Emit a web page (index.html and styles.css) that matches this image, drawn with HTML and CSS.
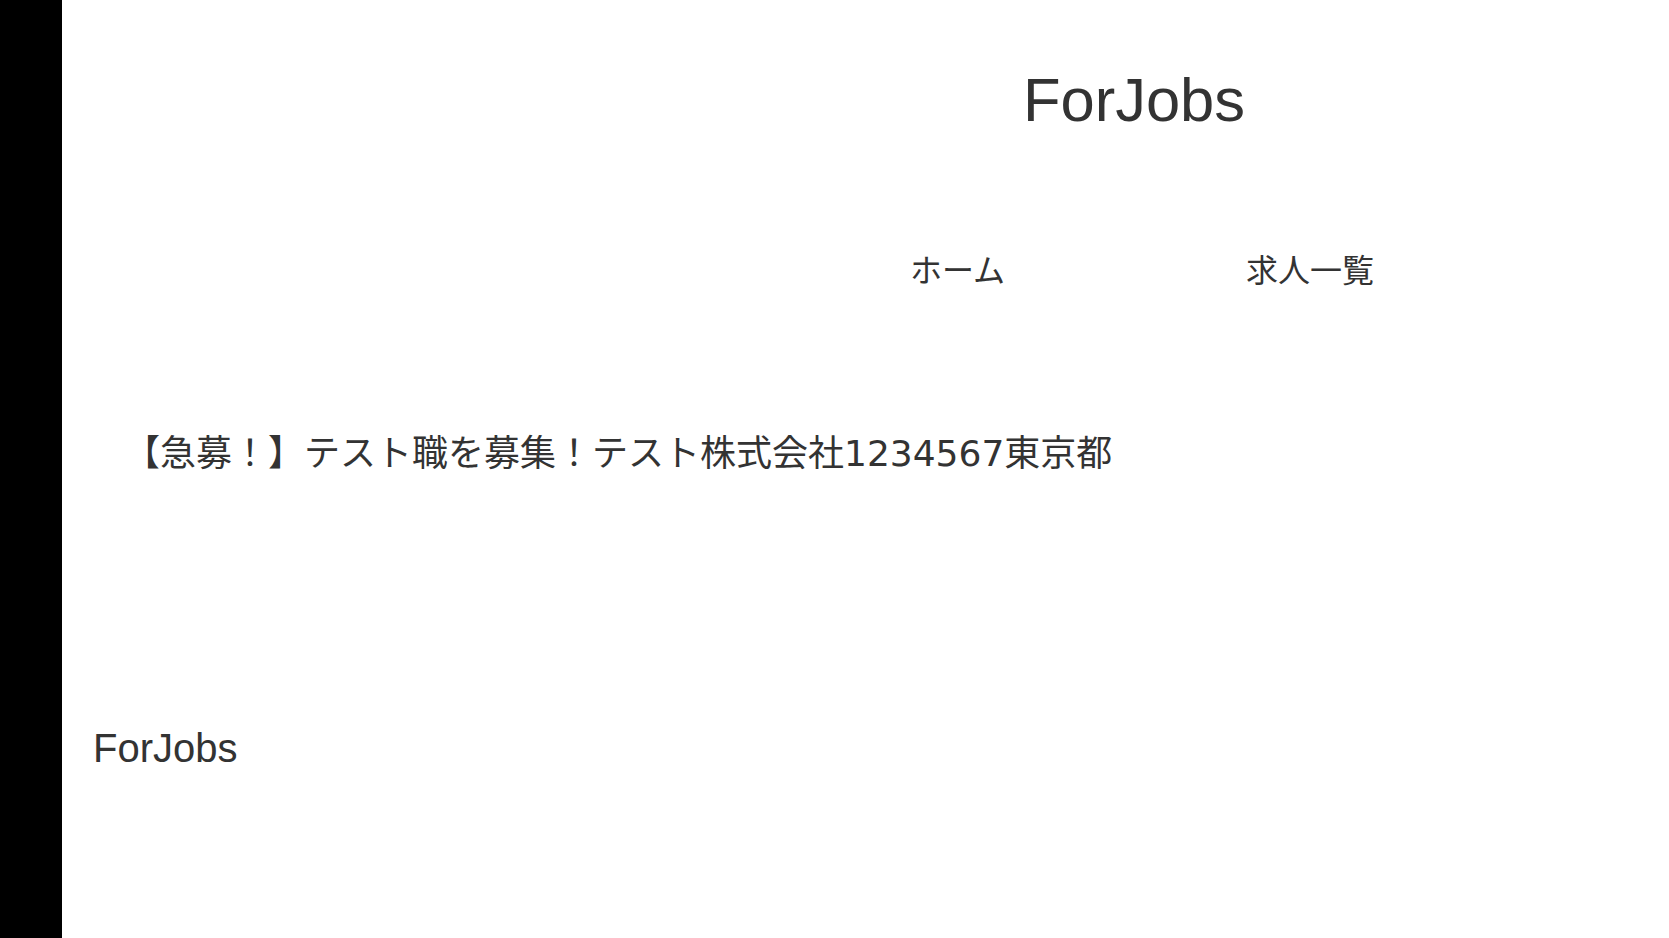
FILE: index.html
```html
<!DOCTYPE html>
<html lang="ja">
<head>
<meta charset="utf-8">
<title>ForJobs</title>
<link rel="stylesheet" href="styles.css">
</head>
<body>
<div class="layout">
  <aside class="sidebar"></aside>
  <div class="page">
    <header class="site-header">
      <div class="header-spacer"></div>
      <div class="header-main">
        <h1 class="logo">ForJobs</h1>
        <nav class="nav">
          <a class="nav-link" href="#">ホーム</a>
          <a class="nav-link" href="#">求人一覧</a>
        </nav>
      </div>
    </header>
    <main class="content">
      <p class="job-title">【急募！】テスト職を募集！テスト株式会社1234567東京都</p>
    </main>
    <footer class="site-footer">
      <p class="footer-logo">ForJobs</p>
    </footer>
  </div>
</div>
</body>
</html>
```
FILE: styles.css
```css
html, body {
  margin: 0;
  padding: 0;
  background: #ffffff;
}
body {
  font-family: "Noto Sans CJK JP", "Noto Sans", sans-serif;
  color: #333333;
}
.layout {
  display: flex;
  min-height: 938px;
}
.sidebar {
  width: 62px;
  flex: 0 0 62px;
  background: #000000;
}
.page {
  flex: 1;
  display: flex;
  flex-direction: column;
}
.site-header {
  display: grid;
  grid-template-columns: 537px 1fr;
  padding-top: 69px;
}
.header-main {
  display: flex;
  flex-direction: column;
  align-items: center;
}
.logo {
  margin: 0;
  font-family: "Liberation Sans", "Noto Sans CJK JP", sans-serif;
  font-size: 61.5px;
  font-weight: 400;
  line-height: 1;
}
.nav {
  display: flex;
  gap: 241px;
  margin-top: 121.5px;
  padding-left: 16px;
}
.nav-link {
  font-size: 32px;
  line-height: 1;
  color: #333333;
  text-decoration: none;
}
.content {
  padding: 152px 0 0 62px;
}
.job-title {
  margin: 0;
  font-family: "DejaVu Sans", "Noto Sans CJK JP", sans-serif;
  font-size: 36px;
  line-height: 1;
}
.site-footer {
  padding: 256px 0 0 31px;
}
.footer-logo {
  margin: 0;
  font-family: "Liberation Sans", "Noto Sans CJK JP", sans-serif;
  font-size: 40px;
  line-height: 1;
}
```
